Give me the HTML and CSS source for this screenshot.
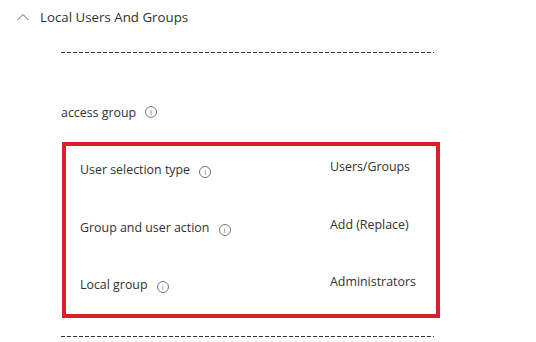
FILE: index.html
```html
<!DOCTYPE html>
<html lang="en">
<head>
  <meta charset="UTF-8" />
  <title>Local Users And Groups</title>
  <link rel="stylesheet" href="styles.css">
</head>
<body>
  <div class="section-head">
    <svg class="chevron" width="12" height="8" viewBox="0 0 12 8"><path d="M0.5 7 L6 1.5 L11.5 7" fill="none" stroke="#605e5c" stroke-width="1"/></svg>
    <span>Local Users And Groups</span>
  </div>

  <div class="section-body">
    <div class="divider"></div>

    <div class="group-label">
      access group
      <span class="info">i</span>
    </div>

    <div class="highlight">
      <div class="row">
        <div class="label">User selection type <span class="info">i</span></div>
        <div class="value">Users/Groups</div>
      </div>
      <div class="row">
        <div class="label">Group and user action <span class="info">i</span></div>
        <div class="value">Add (Replace)</div>
      </div>
      <div class="row">
        <div class="label">Local group <span class="info">i</span></div>
        <div class="value">Administrators</div>
      </div>
    </div>

    <div class="divider bottom"></div>
  </div>
</body>
</html>
```

FILE: styles.css
```css
body {
  margin: 0;
  background: #fff;
  color: #323130;
  font-family: "Open Sans", "Noto Sans", sans-serif;
  font-size: 12.4px;
}

.section-head {
  display: flex;
  align-items: center;
  gap: 11px;
  height: 34px;
  padding-left: 17px;
  font-size: 13.3px;
}

.section-body {
  padding-left: 61px;
}

.divider {
  width: 373px;
  height: 1px;
  margin-top: 18px;
  background: repeating-linear-gradient(to right, #323130 0 4px, transparent 4px 6px);
}

.divider.bottom {
  margin-top: 18px;
}

.group-label {
  display: flex;
  align-items: center;
  gap: 9px;
  margin-top: 49px;
  height: 20px;
}

.info {
  display: inline-flex;
  align-items: center;
  justify-content: center;
  width: 10px;
  height: 10px;
  border: 1px solid #797775;
  border-radius: 50%;
  font-size: 8px;
  line-height: 1;
  color: #797775;
  margin-left: 6px;
  vertical-align: -1px;
}

.group-label .info {
  margin-left: 0;
}

.highlight {
  box-sizing: border-box;
  width: 378px;
  height: 176px;
  margin: 20px 0 0 1px;
  border: 4px solid #d42027;
  padding: 11px 0 0 14px;
}

.row {
  display: flex;
  height: 57.5px;
}

.label {
  width: 250px;
  padding-top: 4px;
}

.value {
  padding-top: 1px;
}
```
